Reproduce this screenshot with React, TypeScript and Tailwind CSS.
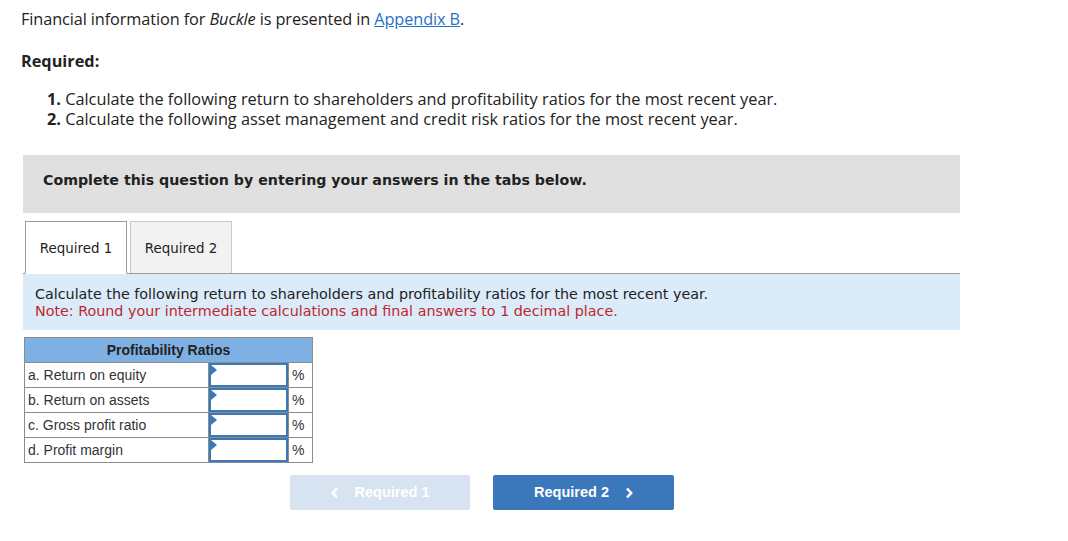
import React from 'react';

const rows = ['a. Return on equity', 'b. Return on assets', 'c. Gross profit ratio', 'd. Profit margin'];

function AnswerCell() {
  return (
    <td className="border border-[#8c8c8c] p-0 w-[80px]">
      <div className="relative h-[24px] border-2 border-[#3c78b5] bg-white">
        <span className="absolute left-0 top-0 w-0 h-0 border-t-[5px] border-b-[5px] border-l-[6px] border-t-transparent border-b-transparent border-l-[#3c78b5]" />
      </div>
    </td>
  );
}

export default function App() {
  return (
    <div className="w-[1068px] h-[541px] bg-white text-[#222] font-['Open_Sans',sans-serif]">
      <div className="pl-[21px] pt-[8px]">
        <p className="text-[16.3px] leading-[22px] tracking-[-0.1px]">
          Financial information for <i>Buckle</i> is presented in{' '}
          <a className="text-[#2a6fc9] underline">Appendix B</a>.
        </p>
        <p className="mt-[20px] text-[16.3px] leading-[22px] font-bold">Required:</p>
        <ol className="mt-[17px] pl-[26px] text-[16.3px] leading-[20px]">
          <li><b>1.</b> Calculate the following return to shareholders and profitability ratios for the most recent year.</li>
          <li><b>2.</b> Calculate the following asset management and credit risk ratios for the most recent year.</li>
        </ol>
      </div>

      <div className="ml-[23px] w-[937px] mt-[26px] h-[58px] bg-[#e0e0e0] flex items-center pl-[20px] pb-[6px]">
        <p className="font-['DejaVu_Sans',sans-serif] font-bold text-[14.2px] text-[#222]">
          Complete this question by entering your answers in the tabs below.
        </p>
      </div>

      <div className="ml-[23px] w-[937px] mt-[9px] font-['DejaVu_Sans',sans-serif]">
        <div className="flex gap-[3px] pl-[2px] border-b border-[#9a9a9a] h-[52px] items-end">
          <div className="w-[102px] h-[53px] -mb-px pt-[3px] bg-white border border-[#9a9a9a] border-b-white flex items-center justify-center text-[13.4px] text-[#222]">
            Required 1
          </div>
          <div className="w-[102px] h-[52px] pt-[3px] bg-[#f2f2f2] border border-[#c8c8c8] border-b-0 flex items-center justify-center text-[13.4px] text-[#222]">
            Required 2
          </div>
        </div>
        <div className="bg-[#dbebf9] h-[56px] pl-[12px] pt-[12px] text-[14.3px] leading-[17px]">
          <p className="text-[#222]">Calculate the following return to shareholders and profitability ratios for the most recent year.</p>
          <p className="text-[#c0272d]">Note: Round your intermediate calculations and final answers to 1 decimal place.</p>
        </div>
      </div>

      <table className="ml-[24px] mt-[7px] border-collapse font-['Liberation_Sans',Arial,sans-serif] text-[14px] text-[#333]">
        <thead>
          <tr>
            <th colSpan={3} className="h-[25px] bg-[#7eb0e4] border border-[#8c8c8c] font-bold text-[14px] text-[#222]">
              Profitability Ratios
            </th>
          </tr>
        </thead>
        <tbody>
          {rows.map((r) => (
            <tr key={r} className="h-[25px]">
              <td className="border border-[#8c8c8c] w-[184px] pl-[3px] py-0">{r}</td>
              <AnswerCell />
              <td className="border border-[#8c8c8c] w-[24px] pl-[3px] text-[#333]">%</td>
            </tr>
          ))}
        </tbody>
      </table>

      <div className="flex ml-[290px] mt-[12px] gap-[23px] font-['Liberation_Sans',Arial,sans-serif] font-bold text-[14.5px] text-white">
        <button className="w-[180px] h-[35px] rounded-[2px] bg-[#d7e3f1] flex items-center justify-center gap-[16px]">
          <svg width="8" height="12" viewBox="0 0 8 12"><path d="M6 1.5 L1.8 6 L6 10.5" stroke="white" strokeWidth="2.5" fill="none" /></svg>
          <span>Required 1</span>
        </button>
        <button className="w-[181px] h-[35px] rounded-[2px] bg-[#3a77bb] flex items-center justify-center gap-[16px]">
          <span>Required 2</span>
          <svg width="8" height="12" viewBox="0 0 8 12"><path d="M2 1.5 L6.2 6 L2 10.5" stroke="white" strokeWidth="2.5" fill="none" /></svg>
        </button>
      </div>
    </div>
  );
}
